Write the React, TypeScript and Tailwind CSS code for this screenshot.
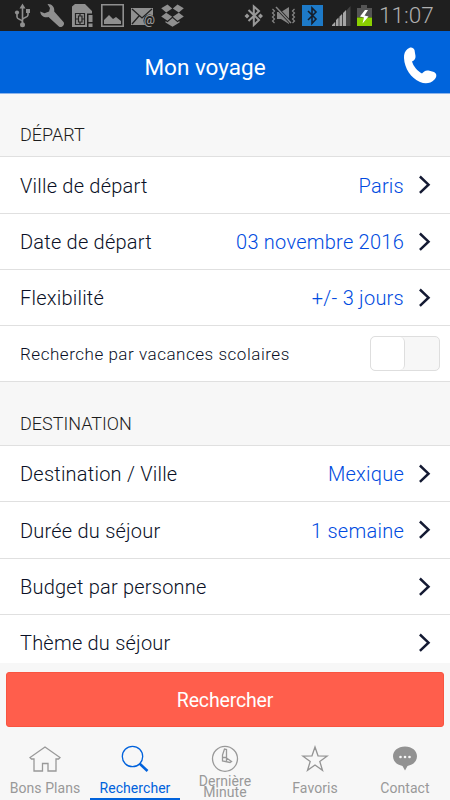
import React, { useState } from "react";

interface RowProps {
  label: string;
  value?: string;
  className?: string;
}

const Chevron = () => (
  <svg width="14" height="20" viewBox="0 0 14 20" fill="none">
    <path d="M1.900 1.500 10.500 9.700 1.900 17.900" stroke="#141a33" strokeWidth="2.500" />
  </svg>
);

const Row: React.FC<RowProps> = ({ label, value, className = "h-14" }) => (
  <button
    className={`flex w-full shrink-0 items-center border-b border-[#e0e0e0] bg-white pl-5 pr-[18px] text-left text-[20px] leading-6 ${className}`}
  >
    <span className="pt-px font-light tracking-[0.22px] text-[#0a1026]">
      {label}
    </span>
    <span className="mr-3.5 ml-auto pt-px font-light tracking-[0.25px] text-[#004be0]">
      {value}
    </span>
    <Chevron />
  </button>
);

const SectionTitle = ({
  children,
  className,
}: {
  children: React.ReactNode;
  className: string;
}) => (
  <h2
    className={`flex shrink-0 items-end border-b border-[#e0e0e0] bg-[#f7f7f7] pb-[11px] pl-5 text-[18px] leading-[21px] font-light text-[#1c1c1c] ${className}`}
  >
    {children}
  </h2>
);

/* Status bar */
const StatusBar = () => (
  <div className="flex h-[31px] shrink-0 items-center bg-[#1f1f1f]">
    <svg width="450" height="31" viewBox="0 0 450 31" fill="none">
      {/* USB */}
      <g stroke="#8f8f8f" strokeWidth="1.6">
        <path d="M22.5 6v18M22.5 22c0-3-5.500-2-5.500-5v-4M22.500 20c0-3 5.500-2 5.500-5v-3" />
      </g>
      <g fill="#8f8f8f">
        <path d="m22.500 3.500 3 5h-6z" />
        <circle cx="22.500" cy="24.800" r="2.500" />
        <circle cx="17" cy="12.500" r="2.100" />
        <path d="M26 9h4v4h-4z" />
        {/* Wrench */}
        <path d="M47.500 4c4-.5 7.500 3 6.700 7.500L63.500 22c2 2.800-1.800 6.500-4.600 4.500L48.500 17c-4 1.200-8-1.200-8.300-5.500l4.300 1.700 4.600-1.700.9-3.500z" />
        {/* SIM card */}
        <path d="M72 6.500 75 4h10l7 7v2.500h-5V27H72z" />
      </g>
      <g stroke="#242424" strokeWidth="1.200">
        <path d="M75.500 13.500h9v11h-9zM78.500 16h3.500v6h-3.500zM75.500 19h3M82 19h2.500M80 13.500V16M80 22v2.500" />
      </g>
      <path d="M88.500 15h4v7h-4zM88.500 23.500h4v3.500h-4z" fill="#8f8f8f" />
      {/* Picture */}
      <path d="M101.800 4.800h21.400v21.400h-21.400z" stroke="#8f8f8f" strokeWidth="1.600" />
      <path d="m104 24v-4l5-5 4 4 3-2 5 4v3z" fill="#8f8f8f" />
      {/* Mail */}
      <path d="M131 8h22v17h-22z" fill="#8f8f8f" />
      <path d="m132 9 10 9 10-9M132 24l7-8" stroke="#222" strokeWidth="1.300" />
      <circle cx="149.500" cy="20.500" r="6" fill="#1f1f1f" />
      <text x="143.800" y="24" fontFamily="Roboto" fontSize="12.500" fontWeight="500" fill="#9a9a9a">
        @
      </text>
      {/* Dropbox */}
      <path
        d="m167.500 4.500 4.700 4-6 4-5-4.200zM177.500 4.500l6.300 3.800-5 4.200-6-4zM161.200 16.500l5-3.700 6 4-4.700 4zM178.800 12.800l5 3.700-6.300 4.300-4.700-4zM165.500 21l2 1.200 5-4.200 5 4.200 2-1.200v1.500l-7 4.200-7-4.200z"
        fill="#8f8f8f"
      />
      {/* Bluetooth, vibrate, bluetooth badge */}
      <path d="m248.500 10 10.500 10-5.200 5V6.500l5.200 4.500-10.500 10" stroke="#999" strokeWidth="2" />
      <path d="m247 13.500 2.500 2.500-2.500 2.500-2.500-2.500zM260.500 13.500l2.500 2.500-2.500 2.500-2.500-2.500z" fill="#999" />
      <path d="M277 12h4l8-5v17l-8-5h-4z" fill="#858585" />
      <path
        d="M272.500 9 274.500 11l-2 2 2 2-2 2 2 2-2 2 2 2M294.500 9l-2 2 2 2-2 2 2 2-2 2 2 2-2 2"
        stroke="#858585"
        strokeWidth="1.200"
      />
      <path d="m276 7 15 16" stroke="#1f1f1f" strokeWidth="3" />
      <path d="m276 7 15 16" stroke="#858585" strokeWidth="1.500" />
      <rect x="302" y="5" width="21" height="21" fill="#1d7ac8" />
      <path d="m308 11 8 8-4 4.500V8l4 4-8 8" stroke="#151f2c" strokeWidth="1.600" />
      {/* Signal */}
      <path d="M350.500 6v20H332z" fill="#424242" />
      <path d="M332 26v-1l3-3v4zM336 26v-6l2.500-2.500V26zM339.500 26v-9.500l2.500-2.500v12zM343 26V13l3-3v16z" fill="#a5a5a5" />
      {/* Battery */}
      <path d="M361 5h6v3h5v9.500h-15V8h4z" fill="#555" />
      <path d="M357 17.500h15V26h-15z" fill="#8bd000" />
      <path d="m365 10-5 6.500 4 1-1.500 6 6-7-4-1 3.500-5.500z" fill="#fff" />
    </svg>
    <span className="-ml-[71px] text-[22.500px] leading-none font-light text-[#b0b0b0]">
      11:07
    </span>
  </div>
);

const HomeIcon = () => (
  <svg width="32" height="27" viewBox="0 0 32 27" fill="none" stroke="#999" strokeWidth="1.300">
    <path d="M5 14H2.500L1 12.500 16 2l15 10.500L29.500 14H27v12h-8v-7.500h-5.500V26H5z" />
  </svg>
);

const SearchIcon = () => (
  <svg width="28" height="27" viewBox="0 0 28 27" fill="none" stroke="#0062dc">
    <circle cx="11.500" cy="11.500" r="10.200" strokeWidth="1.300" />
    <path d="m18.500 18.500 8 7.500" strokeWidth="2.500" />
  </svg>
);

const ClockIcon = () => (
  <svg width="28" height="27" viewBox="0 0 28 27" fill="none" stroke="#999" strokeWidth="1.300">
    <circle cx="14" cy="13.800" r="12.500" />
    <path d="M13.500 4 11.500 10v6l7.500 1.500 1.500-1-5-3.500V4.500zM12 12.500h3.500M15.500 13v3.500" />
  </svg>
);

const StarIcon = () => (
  <svg width="28" height="27" viewBox="0 0 28 27" fill="none" stroke="#949494" strokeWidth="1.300">
    <path d="m14 2 3 8.800 9.300.2-7.500 5.500 2.700 8.800L14 20l-7.500 5.300 2.700-8.800L1.700 11l9.300-.2z" />
  </svg>
);

const ContactIcon = () => (
  <svg width="26" height="27" viewBox="0 0 26 27">
    <path d="M13 1.500c7 0 12 4.300 12 9.800 0 5-4 8.700-9.500 9.600L13 25.500l-2.500-4.600C5 20 1 16.300 1 11.300 1 5.800 6 1.500 13 1.500z" fill="#929292" />
    <g fill="#f7f7f7">
      <circle cx="8.500" cy="12" r="1.300" />
      <circle cx="13" cy="12" r="1.300" />
      <circle cx="17.500" cy="12" r="1.300" />
    </g>
  </svg>
);

const tabs = [
  { label: "Bons Plans", icon: <HomeIcon /> },
  { label: "Rechercher", icon: <SearchIcon />, active: true },
  { label: "Dernière Minute", icon: <ClockIcon />, twoLines: true },
  { label: "Favoris", icon: <StarIcon /> },
  { label: "Contact", icon: <ContactIcon /> },
];

export default function App() {
  const [schoolHolidays, setSchoolHolidays] = useState(false);

  return (
    <div className="flex h-[800px] w-[450px] flex-col overflow-hidden bg-[#f7f7f7] font-[Roboto,sans-serif]">
      <StatusBar />

      {/* Header */}
      <header className="grid h-[63px] shrink-0 grid-cols-[64px_1fr_64px] items-center border-b border-[#8db4ea] bg-[#0064dc] text-white">
        <h1 className="col-start-2 pt-[9px] pr-10 text-center text-[22.500px] leading-7">
          Mon voyage
        </h1>
        <svg width="36" height="40" viewBox="0 0 36 40" className="mt-2 ml-[17px]" fill="#fff">
          <path d="M4.500 3C7 .5 10.500 1 11.500 4l1 6c.3 3-1.500 4.500-3.500 5.500 1.500 5 5.500 9.500 10 12 1.500-2 3.500-3.500 6.500-3l5.500 1.500c3 1.500 3 5 .5 7.500-4 4-9 5-14.500 2.500C8 32 1.500 22.500 1 12 .8 8 2 5 4.500 3z" />
        </svg>
      </header>

      {/* Search form */}
      <main className="flex h-[569px] shrink-0 flex-col overflow-hidden">
        <SectionTitle className="h-[63px]">DÉPART</SectionTitle>
        <Row label="Ville de départ" value="Paris" className="h-[57px]" />
        <Row label="Date de départ" value="03 novembre 2016" />
        <Row label="Flexibilité" value="+/- 3 jours" />
        <div className="flex h-14 shrink-0 items-center justify-between border-b border-[#e0e0e0] bg-white pr-2.5 pl-5">
          <span className="pt-[3px] text-[17px] font-light tracking-[0.53px] text-[#0a1026]">
            Recherche par vacances scolaires
          </span>
          <button
            role="switch"
            aria-checked={schoolHolidays}
            onClick={() => setSchoolHolidays(!schoolHolidays)}
            className={`flex h-[35px] w-[70px] rounded-[5px] border border-[#dedede] bg-[#f7f7f7] ${
              schoolHolidays ? "justify-end" : "justify-start"
            }`}
          >
            <span className="h-full w-[34px] rounded-[5px] border-r border-[#dedede] bg-white" />
          </button>
        </div>

        <SectionTitle className="h-16">DESTINATION</SectionTitle>
        <Row label="Destination / Ville" value="Mexique" />
        <Row label="Durée du séjour" value="1 semaine" className="h-[57px]" />
        <Row label="Budget par personne" />
        <Row label="Thème du séjour" />
      </main>

      <div className="px-1.5 pt-[9px]">
        <button className="h-[55px] w-full rounded-[3px] border border-[#f95440] bg-[#ff5e4c] pt-[3px] text-[19.500px] tracking-[-0.15px] text-white">
          Rechercher
        </button>
      </div>

      {/* Bottom tabs */}
      <nav className="grid grow grid-cols-5">
        {tabs.map((tab) => (
          <button
            key={tab.label}
            className={`flex flex-col items-center border-b-2 pt-[18px] text-[14px] font-normal tracking-[0.05px] ${
              tab.active
                ? "border-[#0062dc] text-[#0062dc]"
                : "border-transparent text-[#999]"
            }`}
          >
            {tab.icon}
            <span
              className={
                tab.twoLines
                  ? "mt-1 w-16 leading-[11px]"
                  : "mt-[7px] leading-[18px] whitespace-nowrap"
              }
            >
              {tab.label}
            </span>
          </button>
        ))}
      </nav>
    </div>
  );
}
